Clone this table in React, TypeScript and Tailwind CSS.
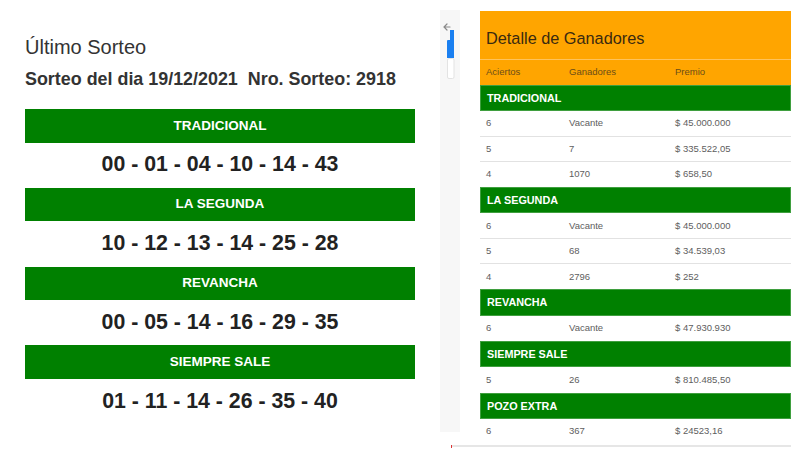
const draws = [
  { name: 'TRADICIONAL', numbers: '00 - 01 - 04 - 10 - 14 - 43' },
  { name: 'LA SEGUNDA', numbers: '10 - 12 - 13 - 14 - 25 - 28' },
  { name: 'REVANCHA', numbers: '00 - 05 - 14 - 16 - 29 - 35' },
  { name: 'SIEMPRE SALE', numbers: '01 - 11 - 14 - 26 - 35 - 40' },
];

const winners = [
  {
    name: 'TRADICIONAL',
    rows: [
      ['6', 'Vacante', '$ 45.000.000'],
      ['5', '7', '$ 335.522,05'],
      ['4', '1070', '$ 658,50'],
    ],
  },
  {
    name: 'LA SEGUNDA',
    rows: [
      ['6', 'Vacante', '$ 45.000.000'],
      ['5', '68', '$ 34.539,03'],
      ['4', '2796', '$ 252'],
    ],
  },
  { name: 'REVANCHA', rows: [['6', 'Vacante', '$ 47.930.930']] },
  { name: 'SIEMPRE SALE', rows: [['5', '26', '$ 810.485,50']] },
  { name: 'POZO EXTRA', rows: [['6', '367', '$ 24523,16']] },
];

function UltimoSorteo() {
  return (
    <div className="w-[440px] pl-[25px] pt-[35px]">
      <h2 className="text-[20px] leading-[24px] text-[#333]">Último Sorteo</h2>
      <p className="mt-[9px] text-[17.9px] leading-[22px] font-bold text-[#333] whitespace-pre">
        {'Sorteo del dia 19/12/2021  Nro. Sorteo: 2918'}
      </p>
      <div className="mt-[19px] w-[390px]">
        {draws.map((d) => (
          <div key={d.name}>
            <div className="h-[33.5px] bg-[#008000] flex items-center justify-center text-white font-bold text-[13.5px]">
              {d.name}
            </div>
            <div className="h-[45.3px] flex items-center justify-center text-[21.3px] font-bold text-[#222]">
              {d.numbers}
            </div>
          </div>
        ))}
      </div>
    </div>
  );
}

function DetalleGanadores() {
  return (
    <div className="w-[311px] mt-[11px] text-[9.5px]">
      <div className="bg-[#ffa500]">
        <div className="h-[49px] flex items-center px-[6px] pt-[6px] text-[16.3px] text-[#3a2a10] border-b border-[#ffc35a]">
          Detalle de Ganadores
        </div>
        <div className="h-[25px] grid grid-cols-[83px_106px_1fr] items-center px-[6px] text-[#6b4d18]">
          <span>Aciertos</span>
          <span>Ganadores</span>
          <span>Premio</span>
        </div>
      </div>
      {winners.map((g) => (
        <div key={g.name}>
          <div className="h-[26.3px] bg-[#008000] border border-[#3f9f3f] flex items-center px-[6px] text-white font-bold text-[10.8px]">
            {g.name}
          </div>
          {g.rows.map((r, i) => (
            <div
              key={i}
              className={`h-[25.3px] grid grid-cols-[83px_106px_1fr] items-center px-[6px] text-[#5e5e5e] ${
                i < g.rows.length - 1 ? 'border-b border-[#e2e2e2]' : ''
              }`}
            >
              <span>{r[0]}</span>
              <span>{r[1]}</span>
              <span>{r[2]}</span>
            </div>
          ))}
        </div>
      ))}
    </div>
  );
}

function SideStrip() {
  return (
    <div className="w-[20px] h-[422px] mt-[10px] bg-[#f7f7f7]">
      <svg width="20" height="80" viewBox="0 0 20 80">
        <path d="M10 17 L4 17 M7 14 L4 17 L7 20" fill="none" stroke="#8a8a8a" strokeWidth="1.2" strokeLinecap="round" />
        <path d="M10 20 H14 V48 H7 V31 Q7 30 8 30 H10 Z" fill="#1a7ff0" />
        <rect x="7.5" y="48.5" width="6.5" height="20" rx="1.5" fill="#fff" stroke="#e3e3e3" />
      </svg>
    </div>
  );
}

export default function App() {
  return (
    <div className="w-[800px] h-[450px] bg-white flex overflow-hidden font-['Liberation_Sans',Arial,sans-serif]">
      <UltimoSorteo />
      <div className="flex flex-col">
        <div className="flex gap-[20px] items-start h-[445px]">
          <SideStrip />
          <DetalleGanadores />
        </div>
        <div className="flex items-start">
          <div className="ml-[11px] w-[1px] h-[3px] bg-[#d33]" />
          <div className="flex-1 h-[2px] bg-[#e6e6e6]" />
        </div>
      </div>
    </div>
  );
}
